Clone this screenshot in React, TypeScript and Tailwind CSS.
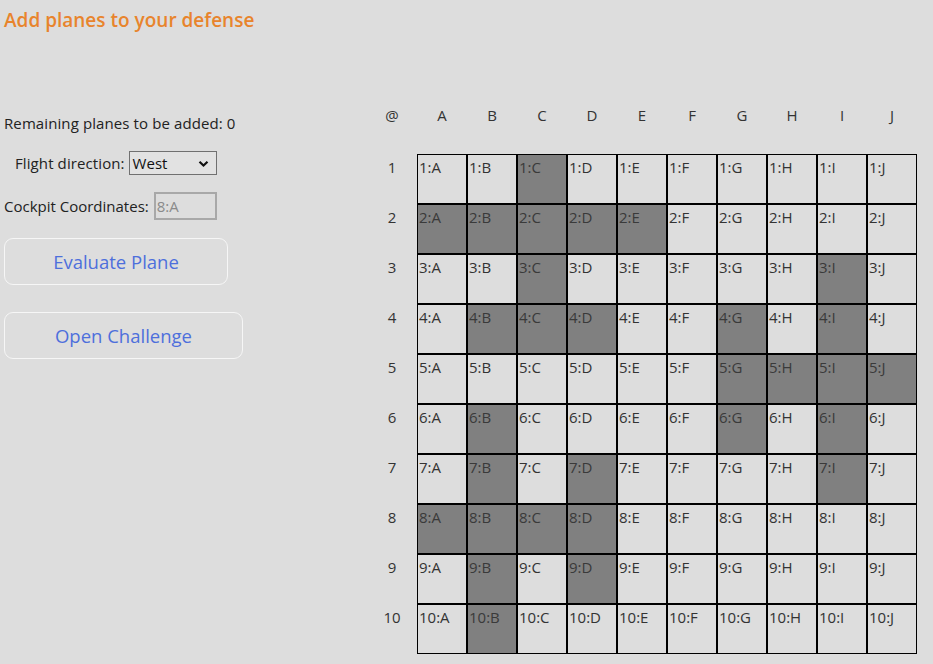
import React from "react";

const COLS = ["A", "B", "C", "D", "E", "F", "G", "H", "I", "J"];
const DARK: Record<number, string[]> = {
  1: ["C"],
  2: ["A", "B", "C", "D", "E"],
  3: ["C", "I"],
  4: ["B", "C", "D", "G", "I"],
  5: ["G", "H", "I", "J"],
  6: ["B", "G", "I"],
  7: ["B", "D", "I"],
  8: ["A", "B", "C", "D"],
  9: ["B", "D"],
  10: ["B"],
};

function Chevron() {
  return (
    <svg width="11" height="8" viewBox="0 0 11 8" className="absolute right-[7px] top-[8px]">
      <path d="M1.5 1.8 L5.5 5.6 L9.5 1.8" fill="none" stroke="#111" strokeWidth="2.2" />
    </svg>
  );
}

export default function App() {
  const rows = Array.from({ length: 10 }, (_, i) => i + 1);
  return (
    <div className="min-h-screen w-full bg-[#dddddd] font-['Open_Sans',sans-serif] text-[#333333] overflow-hidden">
      <h1 className="pl-1 pt-[7px] text-[19px] leading-[26px] font-semibold text-[#e8842c]">
        Add planes to your defense
      </h1>
      <div className="flex mt-[71px]">
        <div className="w-[367px] shrink-0 pl-1 pt-[9px] text-[15px] text-[#222]">
          <div className="leading-[20px] tracking-[0.1px]">Remaining planes to be added: 0</div>
          <div className="flex items-center mt-[18px] pl-[11px] h-[24px]">
            <span className="leading-[20px] tracking-[0.1px]">Flight direction:</span>
            <div className="relative ml-[4px] w-[88px] h-[24px] border border-[#707070] bg-[#e2e2e2]">
              <span className="absolute left-[3px] top-[1px] leading-[20px] text-[#111]">West</span>
              <Chevron />
            </div>
          </div>
          <div className="flex items-center mt-[17px] h-[28px]">
            <span className="leading-[20px]">Cockpit Coordinates:</span>
            <div className="ml-[5px] w-[63px] h-[28px] border-2 border-[#a8a8a8] flex items-center pl-[1px] text-[#8a8a8a]">
              8:A
            </div>
          </div>
          <button className="mt-[18px] w-[224px] h-[47px] rounded-[9px] border border-[#f6f6f6] text-[18.5px] text-[#4d6fdc] flex items-center justify-center">
            Evaluate Plane
          </button>
          <button className="mt-[27px] w-[239px] h-[47px] rounded-[9px] border border-[#f6f6f6] text-[18.5px] text-[#4d6fdc] flex items-center justify-center">
            Open Challenge
          </button>
        </div>
        <table className="table-fixed border-separate border-spacing-0 text-[15px] leading-[20px]">
          <thead>
            <tr>
              <th className="w-[50px] h-[50px] align-top pt-[1px] font-normal text-center">@</th>
              {COLS.map((c) => (
                <th key={c} className="w-[50px] h-[50px] align-top pt-[1px] font-normal text-center">
                  {c}
                </th>
              ))}
            </tr>
          </thead>
          <tbody>
            {rows.map((r) => (
              <tr key={r}>
                <td className="w-[50px] h-[50px] align-top pt-[3px] text-center">{r}</td>
                {COLS.map((c) => {
                  const dark = DARK[r].includes(c);
                  return (
                    <td
                      key={c}
                      className={
                        dark
                          ? "w-[50px] h-[50px] align-top border border-black bg-[#808080] pl-[1px] pt-[2px] text-[#3a3a3a]"
                          : "w-[50px] h-[50px] align-top border border-black pl-[1px] pt-[2px] text-[#333333]"
                      }
                    >
                      {r}:{c}
                    </td>
                  );
                })}
              </tr>
            ))}
          </tbody>
        </table>
      </div>
    </div>
  );
}
